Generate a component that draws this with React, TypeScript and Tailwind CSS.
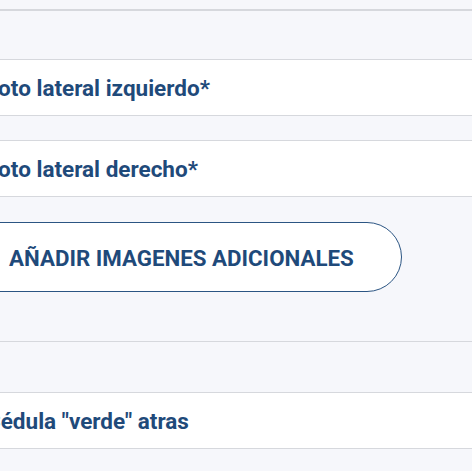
export default function App() {
  const font = { fontFamily: 'Roboto, "Noto Sans", sans-serif' };

  return (
    <div className="h-[471px] w-[472px] overflow-hidden bg-[#f6f7fb]" style={font}>
      <div className="h-[9px]" />
      <div className="h-[51px] border-t-2 border-b border-[#d6d8dd]" />
      <Row label="Foto lateral izquierdo*" />
      <div className="h-[25px] border-b border-[#d6d8dd]" />
      <Row label="Foto lateral derecho*" />
      <div className="h-[144px] pt-[25px]">
        <button className="ml-[-39px] flex h-[70px] items-center rounded-full border border-[#2b5583] bg-white pl-[47px] pr-[47px] pt-[3px] text-[22.3px] font-bold text-[#1f4a7a]">
          AÑADIR IMAGENES ADICIONALES
        </button>
      </div>
      <div className="h-[52px] border-t border-b border-[#d6d8dd]" />
      <Row label='Cédula "verde" atras' />
      <div className="h-[23px]" />
    </div>
  );
}

function Row({ label }: { label: string }) {
  return (
    <div className="flex h-[56px] items-center border-b border-[#d6d8dd] bg-white pt-[3px]">
      <span className="ml-[-14px] whitespace-nowrap text-[22.5px] font-bold text-[#1f4a7a]">
        {label}
      </span>
    </div>
  );
}
